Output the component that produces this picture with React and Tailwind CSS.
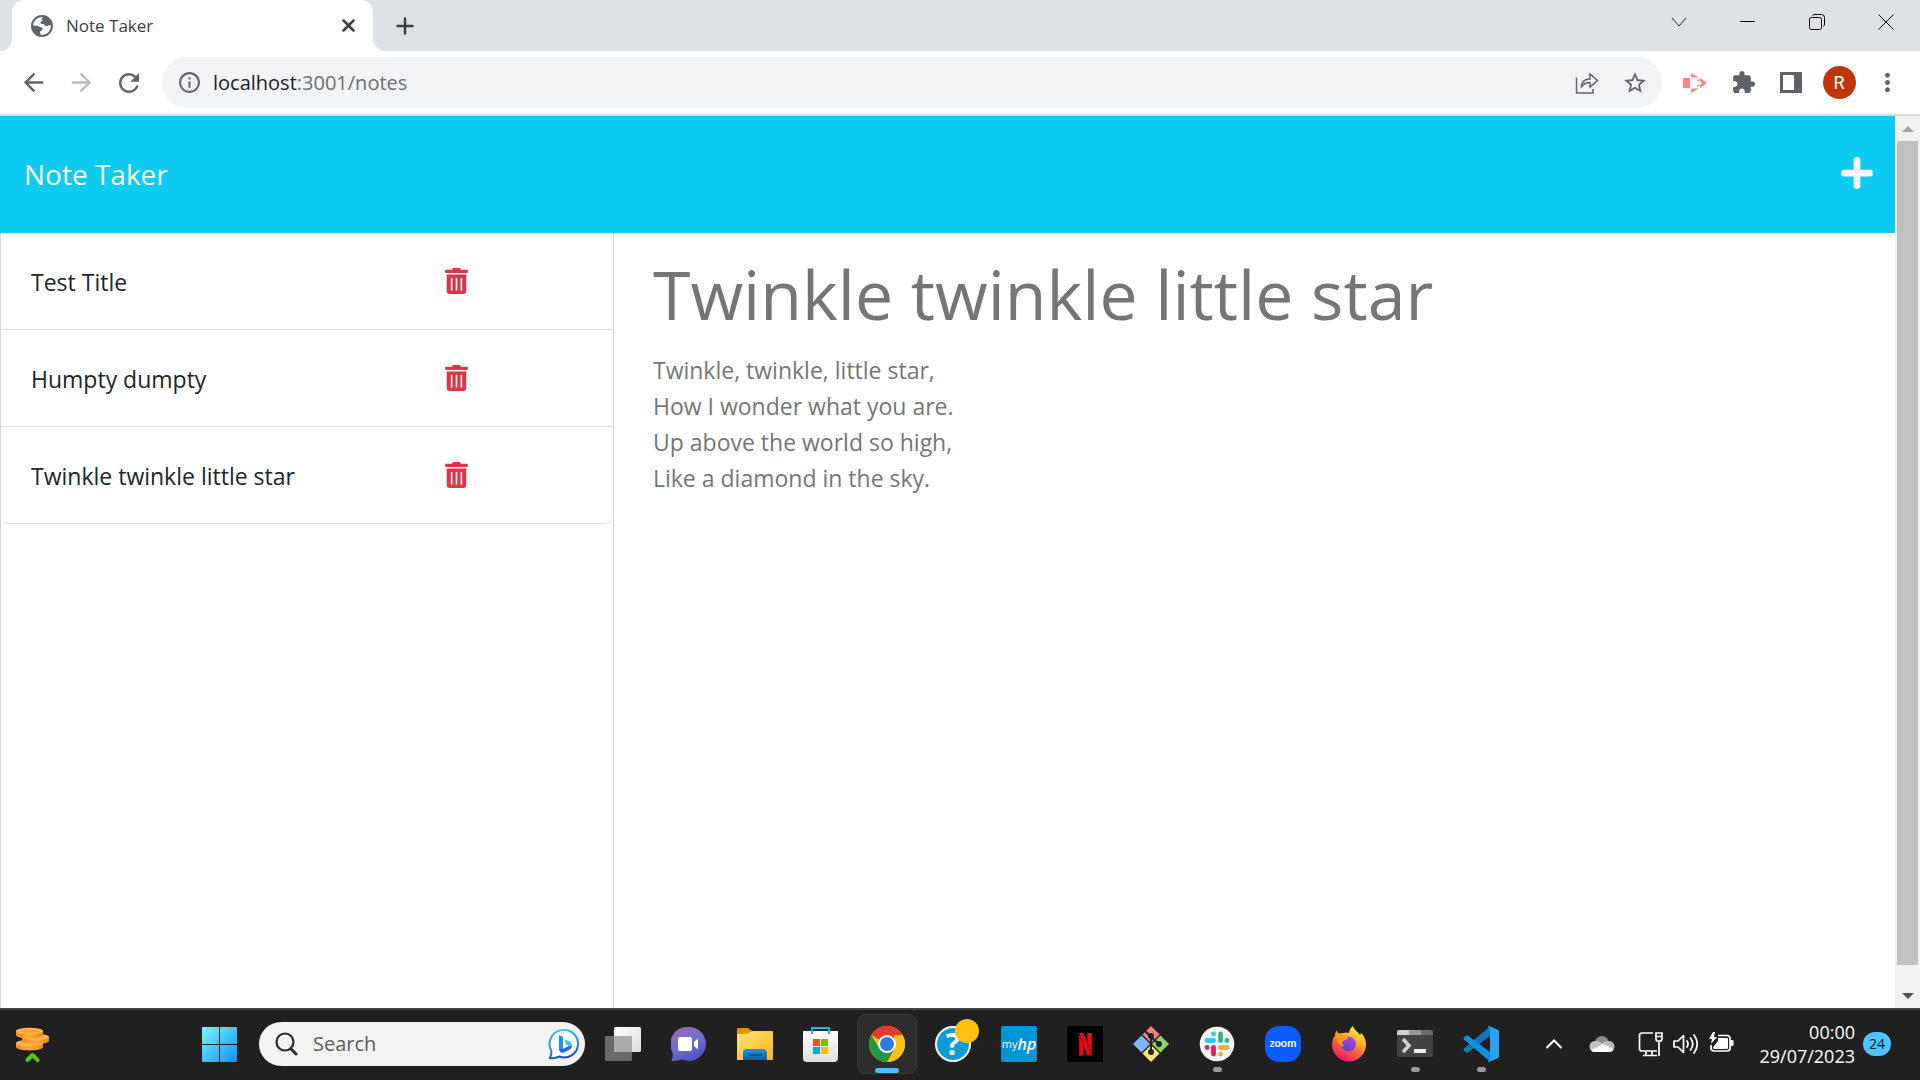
import React from "react";
import {
  MdArrowBack,
  MdArrowForward,
  MdRefresh,
  MdInfoOutline,
  MdStarBorder,
  MdExtension,
  MdMoreVert,
} from "react-icons/md";
import { FaPlus, FaTrashAlt } from "react-icons/fa";
import { SiNetflix } from "react-icons/si";

const notes = ["Test Title", "Humpty dumpty", "Twinkle twinkle little star"];

const poem = `Twinkle, twinkle, little star,
How I wonder what you are.
Up above the world so high,
Like a diamond in the sky.`;

/* ---------- Browser chrome ---------- */

function GlobeIcon() {
  return (
    <svg width="22" height="22" viewBox="0 0 22 22" fill="none">
      <circle cx="11" cy="11" r="10" fill="#fff" stroke="#5f6368" strokeWidth="2" />
      <path d="M12 1.500c-1 1.500-1.500 2.500-.5 3.500s-2 1-2 2.500 1 1.500 2.500 1.500 1.500 2 3.500 2 2-1.500 5.500-1C20.500 5 17 1.500 12 1.500z" fill="#5f6368" />
      <path d="M1.500 10.500c2.500 0 5 0 6.500 1s3.500.5 3.500 2.500-2.500 1.500-2.500 3 1 1.500.5 3.500C5 20 1.500 16 1.500 10.500z" fill="#5f6368" />
    </svg>
  );
}

function TabStrip() {
  return (
    <header className="flex h-[51px] shrink-0 bg-white">
      <div className="w-3 rounded-br-xl bg-[#dee1e6]" />
      <div className="w-[361px] bg-[#dee1e6]">
        <div className="flex h-full items-center rounded-t-xl bg-white pl-[19px] pr-[18px] text-[#3c4043]">
          <GlobeIcon />
          <span className="ml-[13px] flex-1 text-[17px]">Note Taker</span>
          <button type="button" aria-label="Close tab">
            <svg width="13" height="13" viewBox="0 0 13 13" fill="none" stroke="currentColor" strokeWidth="2.500" strokeLinecap="round">
              <path d="M1.500 1.500l10 10M11.500 1.500l-10 10" />
            </svg>
          </button>
        </div>
      </div>
      <div className="flex flex-1 items-center rounded-bl-xl bg-[#dee1e6] pl-[23px]">
        <button type="button" aria-label="New tab" className="text-[#3c4043]">
          <svg width="18" height="18" viewBox="0 0 18 18" fill="none" stroke="currentColor" strokeWidth="2.500" strokeLinecap="round">
            <path d="M9 1.500v15M1.500 9h15" />
          </svg>
        </button>
        <div className="ml-auto flex items-start pb-2">
          <button type="button" aria-label="Search tabs" className="flex w-[68px] justify-center">
            <svg width="16" height="16" viewBox="0 0 16 16" fill="none" stroke="#222">
              <path d="M1 4l7 8 7-8" />
            </svg>
          </button>
          <button type="button" aria-label="Minimise" className="flex w-[69px] justify-center">
            <svg width="16" height="16" viewBox="0 0 16 16" fill="none" stroke="#000">
              <path d="M0 7.500h15" />
            </svg>
          </button>
          <button type="button" aria-label="Restore" className="flex w-[69px] justify-center">
            <svg width="16" height="16" viewBox="0 0 16 16" fill="none" stroke="#000">
              <rect x=".5" y="3.500" width="12" height="12" rx="2" />
              <path d="M3.500 1.500q1-1 2.500-1h6.500a3 3 0 0 1 3 3V10q0 1.500-1 2.500" />
            </svg>
          </button>
          <button type="button" aria-label="Close window" className="flex w-[69px] justify-center">
            <svg width="16" height="16" viewBox="0 0 16 16" fill="none" stroke="#000">
              <path d="M.5.5l15 15M15.500.5l-15 15" />
            </svg>
          </button>
        </div>
      </div>
    </header>
  );
}

function ToolButton({ label, children }) {
  return (
    <button type="button" aria-label={label} className="flex w-12 shrink-0 items-center justify-center text-[#5f6368]">
      {children}
    </button>
  );
}

function ShareIcon() {
  return (
    <svg width="24" height="22" viewBox="0 0 24 22" fill="none" stroke="#5f6368" strokeWidth="1.500">
      <path d="M1.500 5.500V21H18v-4" />
      <path d="M6 15.500c.5-5 3.500-8.500 9-8.500V2l7.500 6.500L15 15v-4.500c-4 0-7 1.500-9 5z" />
    </svg>
  );
}

function RecorderIcon() {
  return (
    <svg width="24" height="20" viewBox="0 0 24 20" fill="#ff8585">
      <path d="M0 5h7v10H0z" />
      <path d="M8 0l8 4.500H8zM8 20l8-4.500H8zM17 5l7 5-7 5v-3l2-2-2-2z" />
      <path d="M14 6.500h2v1.500h-2zM14 12h2v1.500h-2z" />
    </svg>
  );
}

function Toolbar() {
  return (
    <div className="flex h-[65px] shrink-0 items-center border-b-2 border-[#d9dadc] bg-white px-[9px]">
      <ToolButton label="Back"><MdArrowBack size={29} /></ToolButton>
      <ToolButton label="Forward"><MdArrowForward size={29} className="text-[#b9bbbe]" /></ToolButton>
      <ToolButton label="Reload"><MdRefresh size={30} /></ToolButton>
      <div className="ml-[9px] flex h-[51px] flex-1 items-center rounded-full bg-[#f1f3f4] pl-[15px] pr-[3px]">
        <MdInfoOutline size={25} className="text-[#5f6368]" />
        <div className="ml-[11px] flex-1 text-xl text-[#6b6f73]" role="textbox" aria-label="Address">
          <span className="text-[#202124]">localhost</span>:3001/notes
        </div>
        <ToolButton label="Share"><ShareIcon /></ToolButton>
        <ToolButton label="Bookmark"><MdStarBorder size={26} /></ToolButton>
      </div>
      <div className="ml-[9px] flex items-center">
        <ToolButton label="Recorder"><RecorderIcon /></ToolButton>
        <ToolButton label="Extensions"><MdExtension size={25} /></ToolButton>
        <ToolButton label="Side panel">
          <svg width="22" height="21" viewBox="0 0 22 21" fill="#5f6368">
            <path fillRule="evenodd" d="M0 0h22v21H0zM3 3v15h11V3z" />
          </svg>
        </ToolButton>
        <ToolButton label="Profile">
          <span className="flex h-[33px] w-[33px] items-center justify-center rounded-full bg-[#bf360c] font-[Roboto] text-lg text-white">R</span>
        </ToolButton>
        <ToolButton label="Menu"><MdMoreVert size={29} /></ToolButton>
      </div>
    </div>
  );
}

/* ---------- Page ---------- */

function NotesPage() {
  return (
    <div className="flex min-w-0 flex-1 flex-col">
      <nav className="flex h-[117px] shrink-0 items-center justify-between bg-[#0dcaf0] pb-0.5 pl-6 pr-[22px] text-[#f8f9fa]">
        <a href="#notes" className="text-[28px]">Note Taker</a>
        <button type="button" aria-label="New note" className="pb-0.5">
          <FaPlus size={36} className="w-8" />
        </button>
      </nav>
      <div className="flex min-h-0 flex-1">
        <aside className="w-[32.4%] border-x border-[#d3d4d5]">
          <ul>
            {notes.map((title) => (
              <li
                key={title}
                className="flex h-[97px] items-center border-b border-[#dfdfdf] pl-[30px] pr-[145px] last:rounded-b-lg"
              >
                <span className="flex-1 pt-0.5 text-[23px] text-[#212529]">{title}</span>
                <button type="button" aria-label={`Delete ${title}`} className="text-[#dc3545]">
                  <FaTrashAlt size={26} className="w-[23px]" />
                </button>
              </li>
            ))}
          </ul>
        </aside>
        <main className="flex min-w-0 flex-1 flex-col px-[39px] pt-1.5 text-[#757575]">
          <input
            readOnly
            aria-label="Note title"
            defaultValue="Twinkle twinkle little star"
            className="h-[108px] w-full text-[68px] outline-none"
          />
          <textarea
            readOnly
            aria-label="Note text"
            rows={5}
            defaultValue={poem}
            className="mt-[5px] w-full resize-none text-[23px] leading-9 outline-none"
          />
        </main>
      </div>
    </div>
  );
}

function Scrollbar() {
  return (
    <div className="flex w-[25px] shrink-0 flex-col items-center bg-[#f1f1f1]">
      <div className="flex h-[25px] items-center justify-center">
        <svg width="12" height="6" viewBox="0 0 12 6" fill="#a3a3a3"><path d="M0 6l6-6 6 6z" /></svg>
      </div>
      <div className="w-[21px] flex-1 bg-[#c1c1c1]" />
      <div className="flex h-[43px] items-end pb-[9px]">
        <svg width="12" height="6" viewBox="0 0 12 6" fill="#505050"><path d="M0 0l6 6 6-6z" /></svg>
      </div>
    </div>
  );
}

/* ---------- Taskbar icons (36 x 36) ---------- */

function Icon({ children, box = "0 0 36 36" }) {
  return <svg width="36" height="36" viewBox={box} fill="none">{children}</svg>;
}

function CoinsIcon() {
  return (
    <Icon>
      <defs>
        <linearGradient id="coin" x1="0" x2="1">
          <stop offset="0" stopColor="#f08a1c" /><stop offset=".5" stopColor="#ffab3d" /><stop offset="1" stopColor="#ee8416" />
        </linearGradient>
      </defs>
      <path d="M1 17v4c0 4.500 27 4.500 27 0v-4z" fill="url(#coin)" />
      <ellipse cx="14.500" cy="17" rx="13.500" ry="3.200" fill="#ffb54d" />
      <path d="M7 11v4c0 4 27 4 27 0v-4z" fill="url(#coin)" />
      <ellipse cx="20.500" cy="11" rx="13.500" ry="3.200" fill="#ffb54d" />
      <path d="M1 5v4c0 4.500 27 4.500 27 0V5z" fill="url(#coin)" />
      <ellipse cx="14.500" cy="5" rx="13.500" ry="3.200" fill="#ffba55" />
      <ellipse cx="14.500" cy="5" rx="10" ry="1.800" fill="#fb9f2e" />
      <path d="M12.500 34l5-5 5 5" stroke="#66c011" strokeWidth="4" strokeLinecap="round" strokeLinejoin="round" />
    </Icon>
  );
}

function WindowsIcon() {
  return (
    <Icon>
      <defs>
        <linearGradient id="win" x1="0" y1="0" x2="1" y2="1">
          <stop offset="0" stopColor="#7bf6ff" /><stop offset="1" stopColor="#0a91fb" />
        </linearGradient>
      </defs>
      <path d="M2 1h16v17H1V2q0-1 1-1zM19 1h16q1 0 1 1v16H19zM1 19h17v17H2q-1 0-1-1zM19 19h17v16q0 1-1 1H19z" fill="url(#win)" />
    </Icon>
  );
}

function BingIcon() {
  return (
    <svg width="32" height="32" viewBox="0 0 32 32" fill="none">
      <defs>
        <linearGradient id="bing" x1=".4" y1="0" x2=".6" y2="1">
          <stop offset="0" stopColor="#2cc6f0" /><stop offset=".6" stopColor="#2a86ea" /><stop offset="1" stopColor="#1746bd" />
        </linearGradient>
      </defs>
      <path d="M16.500 2a13.700 13.700 0 1 1-5 26.500C8 30 5 30.500 2 30c1.500-3 1.700-5 1.200-7.500A14 14 0 0 1 16.500 2z" fill="#fff" stroke="url(#bing)" strokeWidth="2" />
      <path d="M11 7l4 2v12l-2 3q-2-1-2-3z" fill="#1e8ff0" />
      <path d="M11 21q1 4.500 5 3.500l6.500-3.500q2-2 1-4.500L15 21z" fill="#2467e6" />
      <path d="M16.500 11.500l4.500 1.500q3 1.500 2.500 4.500l-2 1-3.500-2z" fill="#35c9e8" />
    </svg>
  );
}

function TaskViewIcon() {
  return (
    <Icon>
      <defs>
        <linearGradient id="tv" x1="0" y1="0" x2="1" y2="1">
          <stop offset="0" stopColor="#fff" /><stop offset="1" stopColor="#dcdcdc" />
        </linearGradient>
      </defs>
      <rect x="9" y="1" width="27" height="25" rx="1.500" fill="url(#tv)" />
      <rect x="0" y="10" width="27" height="25" rx="1.500" fill="#6a6a6a" />
      <path d="M9 10h18v16H9z" fill="#ababab" />
    </Icon>
  );
}

function ChatIcon() {
  return (
    <Icon>
      <defs>
        <linearGradient id="chat" x1=".2" y1="0" x2=".7" y2="1">
          <stop offset="0" stopColor="#9b6bb0" /><stop offset=".5" stopColor="#6f6fd0" /><stop offset="1" stopColor="#4b50c4" />
        </linearGradient>
      </defs>
      <path d="M17 1a17 17 0 1 1-6 32.500Q6 35 .5 35q2-5 1-8.500A17 17 0 0 1 17 1z" fill="url(#chat)" />
      <rect x="7" y="11" width="14" height="14" rx="2" fill="#fff" />
      <path d="M23 16l4-3.500v11L23 20z" fill="#fff" />
    </Icon>
  );
}

function FolderIcon() {
  return (
    <Icon>
      <defs>
        <linearGradient id="fold" x1="0" y1="0" x2="1" y2="1">
          <stop offset="0" stopColor="#ffe081" /><stop offset="1" stopColor="#fdb813" />
        </linearGradient>
        <linearGradient id="foldb" x1="0" y1="0" x2="0" y2="1">
          <stop offset="0" stopColor="#1a94e6" /><stop offset="1" stopColor="#0a62ad" />
        </linearGradient>
      </defs>
      <path d="M0 3q0-1 1-1h10l4 3-3 4H0z" fill="#de9a00" />
      <path d="M0 8h10l5-3h20q1 0 1 1v28H0z" fill="url(#fold)" />
      <path d="M6 34v-7q0-4 4-4h16q4 0 4 4v7z" fill="url(#foldb)" />
      <path d="M11 29h14" stroke="#07497f" strokeWidth="1.500" />
    </Icon>
  );
}

function StoreIcon() {
  return (
    <Icon>
      <defs>
        <linearGradient id="store" x1="0" y1="0" x2="0" y2="1">
          <stop offset="0" stopColor="#fff" /><stop offset="1" stopColor="#dedede" />
        </linearGradient>
      </defs>
      <path d="M0 5h35v27q0 4-4 4H4q-4 0-4-4z" fill="url(#store)" />
      <path d="M9 8V2h17v6" stroke="#1fb2e8" strokeWidth="2" />
      <path d="M10 13h7v7h-7z" fill="#f25022" />
      <path d="M18 13h7v7h-7z" fill="#7fba00" />
      <path d="M10 21h7v7h-7z" fill="#00a4ef" />
      <path d="M18 21h7v7h-7z" fill="#ffb900" />
    </Icon>
  );
}

function ChromeIcon() {
  return (
    <Icon>
      <circle cx="18" cy="18" r="18" fill="#fbc116" />
      <path d="M18 18L2.400 9A18 18 0 0 1 33.600 9z" fill="#e33b2e" />
      <path d="M33.600 9A18 18 0 0 1 18 36l8-13.500L25 9z" fill="#fbc116" />
      <path d="M2.400 9l8 13.500A9 9 0 0 0 25.800 22.500L18 36A18 18 0 0 1 2.400 9z" fill="#269644" />
      <circle cx="18" cy="18" r="9" fill="#fff" />
      <circle cx="18" cy="18" r="7" fill="#2c7be9" />
    </Icon>
  );
}

function GitIcon() {
  return (
    <Icon>
      <path d="M18 0l8.500 8.500L18 17 9.500 8.500z" fill="#f5827f" />
      <path d="M8.500 9.500L17 18l-8.500 8.500L0 18z" fill="#80b3ff" />
      <path d="M27.500 9.500L36 18l-8.500 8.500L19 18z" fill="#8fd66a" />
      <path d="M18 19l8.500 8.500L18 36l-8.500-8.500z" fill="#ffe680" />
      <path d="M12 5l6 6v15M18 11l8 7" stroke="#222" strokeWidth="2" />
      <circle cx="18" cy="10" r="3" fill="#222" />
      <circle cx="26" cy="18" r="3" fill="#222" />
      <circle cx="18" cy="26" r="3" fill="#222" />
    </Icon>
  );
}

function SlackIcon() {
  return (
    <Icon>
      <circle cx="18" cy="18" r="17.300" fill="#f7f7f7" />
      <g strokeWidth="4.800" strokeLinecap="round">
        <path d="M8 14.500h6.500" stroke="#36c5f0" />
        <path d="M14.500 8v.1" stroke="#36c5f0" />
        <path d="M21.500 8v6.500" stroke="#2eb67d" />
        <path d="M28 14.500h-.1" stroke="#2eb67d" />
        <path d="M28 21.500h-6.500" stroke="#ecb22e" />
        <path d="M21.500 28v-.1" stroke="#ecb22e" />
        <path d="M14.500 28v-6.500" stroke="#e01e5a" />
        <path d="M8 21.500h.1" stroke="#e01e5a" />
      </g>
    </Icon>
  );
}

function FirefoxIcon() {
  return (
    <Icon>
      <defs>
        <linearGradient id="fx" x1=".8" y1=".05" x2=".3" y2="1">
          <stop offset="0" stopColor="#fff44f" /><stop offset=".35" stopColor="#ffb02a" /><stop offset=".65" stopColor="#ff5a36" /><stop offset="1" stopColor="#e8127c" />
        </linearGradient>
        <linearGradient id="fxp" x1=".7" y1="0" x2=".3" y2="1">
          <stop offset="0" stopColor="#b14be8" /><stop offset="1" stopColor="#5a3fc4" />
        </linearGradient>
      </defs>
      <path d="M22 0c1 4 5 5.500 7 9 .8-.5 1-1.500.8-2.500 3.500 3.500 5.200 7.500 5.200 12a17 17 0 0 1-34 0c0-3.500 1-6.500 3-9 0-2 .5-3.500 1.500-5 .5 1.500 1.500 2.500 3 3 2 0 5-1 7-1 .5 0 1.500.2 2.500.5C18 4.500 19.500 2 22 0z" fill="url(#fx)" />
      <circle cx="17.500" cy="18" r="7.500" fill="url(#fxp)" />
      <path d="M5 8c3-1 5 0 6.500 1.500 2.500 0 5 1 5.500 2.500-1 2-4 2-5 3-1.500 1.500-.5 4.500 2 5.500-5 0-8-3-9-12.500z" fill="#ff9a20" />
    </Icon>
  );
}

function TerminalIcon() {
  return (
    <Icon>
      <path d="M0 9h36v20q0 2-2 2H2q-2 0-2-2z" fill="#434343" />
      <path d="M2 4h10v5H0V6q0-2 2-2z" fill="#cfcfcf" />
      <path d="M12 4h12v5H12z" fill="#9a9a9a" />
      <path d="M24 4h10q2 0 2 2v3H24z" fill="#6b6b6b" />
      <path d="M6 13l6 6.500L6 26" stroke="#d2d2d2" strokeWidth="3.500" />
      <path d="M17 23h12v4H17z" fill="#ececec" />
    </Icon>
  );
}

function VsCodeIcon() {
  return (
    <Icon>
      <path d="M1 24.500l2 1.800q1 .7 2 0L27 10V.5L1 22.500q-1 1 0 2z" fill="#1277bd" />
      <path d="M1 11.500l2-1.800q1-.7 2 0L27 26v9.500L1 13.500q-1-1 0-2z" fill="#1090db" />
      <path d="M26 0l9 4q1 .5 1 1.500v25q0 1-1 1.500l-9 4q-1 0-1-1 2-1 2-3V4q0-2-2-3 0-1 1-1z" fill="#27a4f2" />
    </Icon>
  );
}

function TaskButton({ label, children, active, running }) {
  return (
    <div className="flex w-[66px] shrink-0 justify-center">
      <button
        type="button"
        aria-label={label}
        className={
          active
            ? "relative flex h-[60px] w-[60px] items-center justify-center rounded-lg border border-[#3a3a3a] bg-[#2d2d2d]"
            : "relative flex h-[60px] w-[60px] items-center justify-center"
        }
      >
        {children}
        {active && <span className="absolute bottom-0 h-[5px] w-6 rounded-full bg-[#4cc2ff]" />}
        {running && <span className="absolute bottom-0.5 h-[5px] w-[9px] rounded-full bg-[#9a9a9a]" />}
      </button>
    </div>
  );
}

function Tray() {
  return (
    <div className="ml-auto flex items-center text-white">
      <button type="button" aria-label="Show hidden icons" className="mr-[26px]">
        <svg width="18" height="12" viewBox="0 0 18 12" fill="none" stroke="#fff" strokeWidth="2"><path d="M1.500 10L9 2.500l7.500 7.500" /></svg>
      </button>
      <button type="button" aria-label="OneDrive" className="mr-[23px]">
        <svg width="26" height="18" viewBox="0 0 26 18">
          <path d="M6 7a7 7 0 0 1 13.500-1l-5 6z" fill="#8c8c8c" />
          <path d="M6 17a5.500 5.500 0 0 1 0-11q4-.5 8 3l-6 8z" fill="#c4c4c4" />
          <path d="M12 9.500q3-4 7.500-3.500a5.500 5.500 0 0 1 1 11z" fill="#bdbdbd" />
          <path d="M2 15.500l12-6.500 10.500 5q-1 3-4 3H6q-2.500 0-4-1.500z" fill="#fff" />
        </svg>
      </button>
      <button type="button" aria-label="Network" className="mr-2.5">
        <svg width="25" height="26" viewBox="0 0 25 26" fill="none" stroke="#fff" strokeWidth="1.700">
          <path d="M15 2H4Q1.500 2 1.500 4.500v13Q1.500 20 4 20h15M8 20v4M14 20v4M5 24.500h14" />
          <path d="M18 2h6v6q0 2-2 2h-2q-2 0-2-2zM18 5.500h6M21 10v15" />
        </svg>
      </button>
      <button type="button" aria-label="Volume" className="mr-2.5">
        <svg width="25" height="22" viewBox="0 0 25 22" fill="none" stroke="#fff" strokeWidth="1.700" strokeLinecap="round" strokeLinejoin="round">
          <path d="M1 8v6h4l5.500 5.500v-17L5 8zM14 8q2 3 0 6M17.500 5q4.500 6 0 12M21 2q6.500 9 0 18" />
        </svg>
      </button>
      <button type="button" aria-label="Battery" className="mr-[25px] pb-1">
        <svg width="26" height="22" viewBox="0 0 26 22" fill="none">
          <path d="M10 4.500h9q3 0 3 3V17q0 3-3 3H6q-3 0-3-3v-3" stroke="#fff" strokeWidth="1.700" />
          <path d="M10 7h9q1 0 1 1v9q0 1-1 1H6.500Q5 18 5 16.500L10 10zM23 9h1.500q1 0 1 1v4q0 1-1 1H23zM5 1L1 8h3l-1 5 6-7H6l1-5z" fill="#fff" />
        </svg>
      </button>
      <div className="text-right text-lg leading-6">
        <div>00:00</div>
        <div>29/07/2023</div>
      </div>
      <span className="ml-2 mr-[29px] flex h-6 w-7 items-center justify-center rounded-full bg-[#4cc2ff] text-sm text-[#111]">24</span>
    </div>
  );
}

function Taskbar() {
  return (
    <footer className="flex h-[72px] shrink-0 items-center border-t-2 border-[#454545] bg-[#202020] pb-0.5">
      <button type="button" aria-label="Widgets" className="ml-[15px]"><CoinsIcon /></button>
      <div className="ml-[135px]">
        <TaskButton label="Start"><WindowsIcon /></TaskButton>
      </div>
      <label className="ml-[7px] mr-[5px] flex h-11 w-[326px] items-center rounded-full bg-[#f3f3f3] pl-4 pr-[5px]">
        <svg width="23" height="24" viewBox="0 0 23 24" fill="none" stroke="#2b2b2b" strokeWidth="2.200" strokeLinecap="round">
          <circle cx="10" cy="10" r="8.500" /><path d="M16 17l5 5" strokeWidth="3" />
        </svg>
        <input
          aria-label="Search"
          placeholder="Search"
          className="ml-[15px] min-w-0 flex-1 text-xl text-[#5c5c5c] outline-none placeholder:text-[#5c5c5c]"
        />
        <BingIcon />
      </label>
      <TaskButton label="Task view"><TaskViewIcon /></TaskButton>
      <TaskButton label="Chat"><ChatIcon /></TaskButton>
      <TaskButton label="File Explorer"><FolderIcon /></TaskButton>
      <TaskButton label="Microsoft Store"><StoreIcon /></TaskButton>
      <TaskButton label="Google Chrome" active><ChromeIcon /></TaskButton>
      <TaskButton label="Get Help">
        <span className="flex h-9 w-9 items-center justify-center rounded-full border-2 border-white bg-[#0c9bdb] text-3xl font-bold text-white">?</span>
        <span className="absolute right-1 top-[5px] h-6 w-6 rounded-full bg-[#ffc20e]" />
      </TaskButton>
      <TaskButton label="myHP">
        <span className="flex h-9 w-9 items-center justify-center rounded-xs bg-[#0096d6] text-[11px] text-white">
          my<i className="text-base font-semibold">hp</i>
        </span>
      </TaskButton>
      <TaskButton label="Netflix">
        <span className="flex h-9 w-9 items-center justify-center bg-black"><SiNetflix size={23} color="#e50914" /></span>
      </TaskButton>
      <TaskButton label="Git"><GitIcon /></TaskButton>
      <TaskButton label="Slack" running><SlackIcon /></TaskButton>
      <TaskButton label="Zoom">
        <span className="flex h-9 w-9 items-center justify-center rounded-[14px] bg-[#0b5cff] pb-0.5 font-[Lato] text-[11px] font-bold text-white">zoom</span>
      </TaskButton>
      <TaskButton label="Firefox"><FirefoxIcon /></TaskButton>
      <TaskButton label="Terminal" running><TerminalIcon /></TaskButton>
      <TaskButton label="Visual Studio Code" running><VsCodeIcon /></TaskButton>
      <Tray />
    </footer>
  );
}

export default function App() {
  return (
    <div className="flex h-screen flex-col overflow-hidden bg-white font-['Open_Sans','Noto_Sans',sans-serif]">
      <TabStrip />
      <Toolbar />
      <div className="flex min-h-0 flex-1">
        <NotesPage />
        <Scrollbar />
      </div>
      <Taskbar />
    </div>
  );
}
